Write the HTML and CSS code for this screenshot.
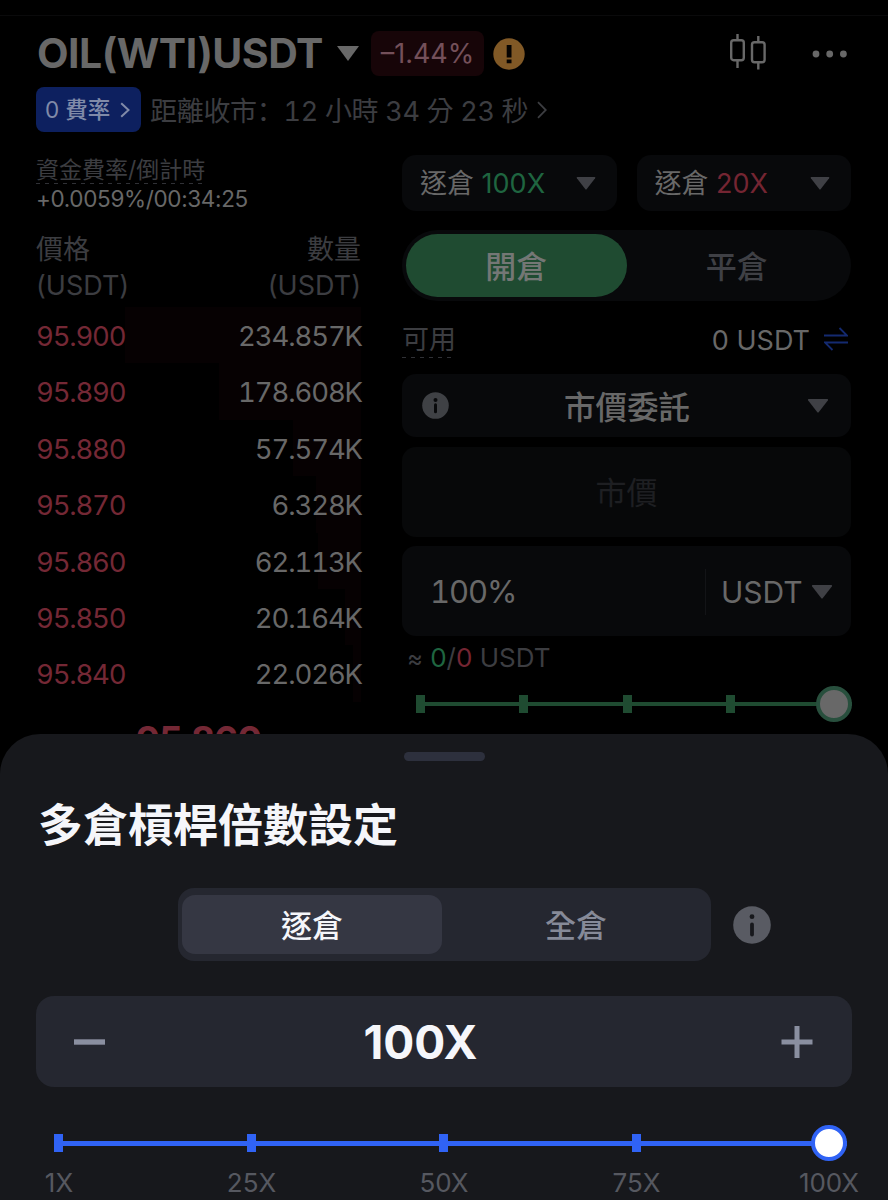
FILE: index.html
```html
<!DOCTYPE html>
<html lang="zh-Hant">
<head>
  <meta charset="UTF-8" />
  <meta name="viewport" content="width=device-width, initial-scale=1" />
  <title>OIL(WTI)USDT</title>
  <link rel="stylesheet" href="styles.css">
</head>
<body>
<div class="screen">
  <div class="status-line"></div>

  <header class="pair">
    <h1>OIL(WTI)USDT</h1>
    <svg class="pair-arrow" width="22" height="15" viewBox="0 0 22 15"><path d="M0 0h22L11 15z" fill="#686868"/></svg>
    <span class="change">–1.44%</span>
    <svg class="warn" width="32" height="32" viewBox="0 0 32 32"><circle cx="16" cy="16" r="15.7" fill="#815926"/><path d="M13.7 7h4.8v12.5h-4.8zM13.7 21.5h4.8v3.8h-4.8z" fill="#050301"/></svg>
    <svg class="candles" width="38" height="38" viewBox="0 0 38 38" fill="none" stroke="#686868" stroke-width="2.4"><rect x="2.2" y="7.2" width="12.6" height="20" rx="2.5"/><path d="M8.5 1v6M8.5 27v8M29.3 3v6M29.3 29v7.5"/><rect x="23" y="9.2" width="12.6" height="20" rx="2.5"/></svg>
    <svg class="dots" width="36" height="8" viewBox="0 0 36 8" fill="#686868"><circle cx="4" cy="4" r="3.4"/><circle cx="17.7" cy="4" r="3.4"/><circle cx="31.4" cy="4" r="3.4"/></svg>
  </header>

  <div class="notice">
    <span class="fee"><span><span class="zero">0</span> 費率</span>
      <svg width="10" height="16" viewBox="0 0 10 16" fill="none" stroke="#808aa8" stroke-width="2"><path d="M1.2 1.2L8.5 8l-7.3 6.8"/></svg>
    </span>
    <span class="closing">距離收市<span class="colon" lang="zh-Hans">：</span>12 小時 34 分 23 秒</span>
    <svg width="10" height="18" viewBox="0 0 10 18" fill="none" stroke="#3c3d41" stroke-width="1.8"><path d="M1 1.2L8.8 9 1 16.8"/></svg>
  </div>

  <main class="columns">
    <section class="book">
      <div class="funding"><span class="dashed">資金費率/倒計時</span></div>
      <div class="rate">+0.0059%/00:34:25</div>
      <div class="book-head">
        <div>價格<br>(USDT)</div>
        <div class="right">數量<br>(USDT)</div>
      </div>
      <div class="row"><i style="width:236px"></i><b>95.900</b><span>234.857K</span></div>
      <div class="row"><i style="width:142px"></i><b>95.890</b><span>178.608K</span></div>
      <div class="row"><i style="width:68px"></i><b>95.880</b><span>57.574K</span></div>
      <div class="row"><i style="width:45px"></i><b>95.870</b><span>6.328K</span></div>
      <div class="row"><i style="width:43px"></i><b>95.860</b><span>62.113K</span></div>
      <div class="row"><i style="width:16px"></i><b>95.850</b><span>20.164K</span></div>
      <div class="row"><i style="width:8px"></i><b>95.840</b><span>22.026K</span></div>
      <div class="last-price">95.860</div>
    </section>

    <section class="order">
      <div class="modes">
        <div class="mode"><span>逐倉 <em class="green">100X</em></span><svg width="20" height="13" viewBox="0 0 20 13"><path d="M1.5 0h17q1.5 0 .6 1.3L10.8 12q-.8 1-1.6 0L.9 1.3Q0 0 1.5 0z" fill="#3f4045"/></svg></div>
        <div class="mode"><span>逐倉 <em class="red">20X</em></span><svg width="20" height="13" viewBox="0 0 20 13"><path d="M1.5 0h17q1.5 0 .6 1.3L10.8 12q-.8 1-1.6 0L.9 1.3Q0 0 1.5 0z" fill="#3f4045"/></svg></div>
      </div>

      <div class="side">
        <span class="side-on">開倉</span>
        <span>平倉</span>
      </div>

      <div class="available">
        <span class="dashed">可用</span>
        <span class="balance">0 USDT</span>
        <svg width="24" height="24" viewBox="0 0 24 24" fill="none" stroke="#142a70" stroke-width="1.8"><path d="M0 8.5h23L15.5 1M24 15.5H1L8.5 23"/></svg>
      </div>

      <div class="field type">
        <svg width="27" height="27" viewBox="0 0 27 27"><circle cx="13.5" cy="13.5" r="13.3" fill="#3f4145"/><circle cx="13.5" cy="8" r="2" fill="#08090b"/><path d="M13.5 12.8v7" stroke="#08090b" stroke-width="3" stroke-linecap="round"/></svg>
        <span>市價委託</span>
        <svg width="22" height="14" viewBox="0 0 20 13"><path d="M1.5 0h17q1.5 0 .6 1.3L10.8 12q-.8 1-1.6 0L.9 1.3Q0 0 1.5 0z" fill="#3f4045"/></svg>
      </div>
      <div class="field price">市價</div>
      <div class="field amount">
        <span class="percent">100%</span>
        <span class="unit">USDT</span>
        <svg width="22" height="14" viewBox="0 0 20 13"><path d="M1.5 0h17q1.5 0 .6 1.3L10.8 12q-.8 1-1.6 0L.9 1.3Q0 0 1.5 0z" fill="#3f4045"/></svg>
      </div>
      <div class="approx"><small>≈</small> <em class="green">0</em>/<em class="red">0</em> USDT</div>
      <div class="slider slider-green"><i></i><i></i><i></i><i></i><u></u></div>
    </section>
  </main>

  <!-- leverage sheet -->
  <section class="sheet">
    <div class="handle"></div>
    <h2>多倉槓桿倍數設定</h2>
    <div class="margin-mode">
      <div class="tabs">
        <span class="tab-on">逐倉</span>
        <span>全倉</span>
      </div>
      <svg width="38" height="38" viewBox="0 0 38 38"><circle cx="19" cy="19" r="18.8" fill="#595b63"/><circle cx="19" cy="10.7" r="2.4" fill="#17181c"/><path d="M19 18.5v10" stroke="#17181c" stroke-width="3.8" stroke-linecap="round"/></svg>
    </div>
    <div class="stepper">
      <svg width="32" height="32" viewBox="0 0 32 32" stroke="#8a8fa0" stroke-width="5.4"><path d="M1 16h31"/></svg>
      <span>100X</span>
      <svg width="32" height="32" viewBox="0 0 32 32" stroke="#8a8fa0" stroke-width="5"><path d="M.5 16h31M16 0v32"/></svg>
    </div>
    <div class="slider slider-blue"><i></i><i></i><i></i><i></i><u></u></div>
    <div class="marks"><span>1X</span><span>25X</span><span>50X</span><span>75X</span><span>100X</span></div>
  </section>
</div>
</body>
</html>
```

FILE: styles.css
```css
* { margin: 0; padding: 0; box-sizing: border-box; }
html, body { height: 100%; overflow: hidden; background: #000; }
body {
  font-family: Inter, "Noto Sans CJK TC", sans-serif;
  color: #686868;
}
svg { display: block; flex-shrink: 0; }
em { font-style: normal; }

.green { color: #1f6540; }
.red { color: #742532; }

.screen {
  position: relative;
  width: 888px; height: 1200px;
  overflow: hidden;
  background: #000;
}

.status-line { height: 16px; border-bottom: 1px solid #0a0a0b; }

/* header */
.pair {
  display: flex;
  align-items: center;
  height: 75px;
  padding: 0 40px 0 37px;
}
.pair h1 {
  width: 300px;
  margin-top: -2px;
  font-size: 41px;
  line-height: 50px;
  font-weight: 700;
  letter-spacing: -0.5px;
  white-space: nowrap;
}
.change {
  width: 113px; height: 45px;
  margin-left: 12px;
  border-radius: 8px;
  background: #170508;
  color: #74505a;
  font-size: 27px;
  line-height: 46px;
  text-align: center;
}
.warn { margin-left: 9px; }
.candles { margin: -3px 0 0 auto; }
.dots { margin-left: 45px; }

.notice {
  display: flex;
  align-items: center;
  height: 45px;
  margin-top: -4px;
  padding-left: 36px;
  color: #3c3d41;
}
.fee {
  display: flex;
  align-items: center;
  justify-content: space-between;
  width: 105px; height: 45px;
  padding: 0 11px 0 9px;
  border-radius: 8px;
  background: #0d205f;
  color: #808aa8;
  font-size: 22.5px;
  line-height: 40px;
  font-weight: 500;
  white-space: nowrap;
}
.zero { font-weight: 400; }
.closing {
  width: 379px;
  margin: -1px 8px 0 9px;
  font-size: 27px;
  font-variant-numeric: tabular-nums;
  letter-spacing: -.3px;
  white-space: nowrap;
}
.colon { font-family: "Noto Sans CJK SC", sans-serif; }

.columns {
  display: flex;
  justify-content: space-between;
  padding: 23px 37px 0 36px;
}

/* order book */
.book { width: 325px; }
.dashed {
  background: repeating-linear-gradient(90deg, #303136 0 4px, transparent 4px 9px) left bottom / 100% 1px no-repeat;
}
.funding {
  height: 29px;
  font-size: 23px;
  line-height: 31px;
  color: #3c3d41;
}
.funding .dashed { display: inline-block; height: 29px; }
.rate {
  height: 30px;
  font-size: 22.5px;
  line-height: 30px;
  letter-spacing: -.35px;
}
.book-head {
  display: flex;
  justify-content: space-between;
  height: 93px;
  padding-top: 18px;
  font-size: 27px;
  line-height: 36px;
  color: #3c3d41;
}
.right { text-align: right; }
.row {
  position: relative;
  display: flex;
  justify-content: space-between;
  height: 56.4px;
  font-size: 27.5px;
  line-height: 58px;
  font-variant-numeric: tabular-nums;
}
.row i {
  position: absolute;
  top: 0; right: 0; bottom: 0;
  background: #060102;
}
.row b, .row span { position: relative; letter-spacing: -1.1px; }
.row b { font-weight: 400; color: #742835; }
.row b { letter-spacing: -1.2px; }
.row span { margin-right: -1px; }
.last-price {
  margin-top: 15px;
  font-size: 37px;
  line-height: 46px;
  font-weight: 700;
  letter-spacing: -1px;
  color: #742835;
  text-align: center;
}

/* order form */
.order { width: 449px; }
.modes { display: flex; gap: 20px; }
.mode {
  display: flex;
  align-items: center;
  justify-content: space-between;
  flex: 1;
  height: 56px;
  padding: 0 21px 0 18px;
  border-radius: 14px;
  background: #08090b;
  font-size: 27px;
  line-height: 40px;
  white-space: nowrap;
}
.mode span { margin-top: 1px; }
.side {
  display: flex;
  height: 71px;
  margin-top: 19px;
  padding: 4px;
  border-radius: 36px;
  background: #08090b;
  color: #3f4045;
  font-size: 31px;
  font-weight: 500;
  line-height: 66px;
  text-align: center;
}
.side span { flex: 1; }
.side .side-on {
  border-radius: 32px;
  background: #1f4b31;
  color: #747775;
}
.available {
  display: flex;
  align-items: center;
  height: 73px;
  padding: 2px 3px 0 0;
  font-size: 27px;
}
.available .dashed {
  height: 38px;
  line-height: 40px;
  color: #3c3d41;
}
.balance { margin: 3px 14px 0 auto; font-size: 27px; }

.field {
  display: flex;
  align-items: center;
  border-radius: 14px;
  background: #08090b;
}
.type {
  justify-content: space-between;
  height: 63px;
  padding: 0 22px 0 20px;
  font-size: 31.5px;
  font-weight: 500;
}
.type span { margin: -1px 0 0 -2px; }
.price {
  justify-content: center;
  height: 90px;
  margin-top: 10px;
  padding-bottom: 3px;
  background: #070809;
  color: #1e1f22;
  font-size: 31px;
}
.amount {
  height: 90px;
  margin-top: 9px;
  padding: 1px 18px 0 28px;
  font-size: 31px;
  font-variant-numeric: tabular-nums;
}
.percent { flex: 1; letter-spacing: -1.1px; }
.unit {
  width: 106px;
  padding-left: 15px;
  border-left: 1px solid #131417;
  line-height: 46px;
  font-size: 30px;
}
.approx {
  height: 45px;
  padding-left: 5px;
  font-size: 26px;
  line-height: 44px;
  color: #3c3d41;
  white-space: nowrap;
}
.approx small { font-size: 24px; }

/* ticked sliders */
.slider {
  display: flex;
  align-items: center;
  justify-content: space-between;
  height: 36px;
}
.slider i { width: 9px; height: 18px; background: currentColor; }
.slider u {
  width: 36px; height: 36px;
  margin-left: -13.5px;
  border: 4px solid currentColor;
  border-radius: 50%;
}
.slider-green {
  margin: 5px -1px 0 14px;
  color: #1f4b31;
  background: linear-gradient(currentColor, currentColor) center / 100% 4px no-repeat;
}
.slider-green u { background: #686868; border-color: #284f3d; }

/* leverage sheet */
.sheet {
  position: absolute;
  left: 0; right: 0; top: 734px; bottom: 0;
  padding: 18px 36px 0;
  border-radius: 40px 40px 0 0;
  background: #17181c;
}
.handle {
  width: 81px; height: 9px;
  margin: 0 auto;
  border-radius: 5px;
  background: #2d303d;
}
.sheet h2 {
  margin-top: 32px;
  padding-left: 2px;
  font-size: 45px;
  line-height: 66px;
  font-weight: 700;
  color: #f5f6fa;
}
.margin-mode {
  display: flex;
  align-items: center;
  gap: 22px;
  margin: 29px 0 0 142px;
}
.tabs {
  display: flex;
  width: 533px; height: 73px;
  padding: 7px 4px;
  border-radius: 16px;
  background: #252730;
  color: #868a98;
  font-size: 31px;
  font-weight: 500;
  line-height: 61px;
  text-align: center;
}
.tabs span { width: 260px; height: 59px; }
.tabs span + span { margin-left: 4px; }
.tabs .tab-on { border-radius: 13px; background: #353743; color: #f5f6fa; }
.stepper {
  display: flex;
  align-items: center;
  justify-content: space-between;
  height: 91px;
  margin-top: 35px;
  padding: 0 39px 0 37px;
  border-radius: 18px;
  background: #252730;
  color: #f5f6fa;
  font-size: 46px;
  font-weight: 700;
}
.stepper span { margin-left: -45px; }
.slider-blue {
  margin: 38px 5px 0 18px;
  color: #3063f5;
  background: linear-gradient(currentColor, currentColor) center / 100% 5px no-repeat;
}
.slider-blue u { background: #fff; }
.marks {
  display: flex;
  justify-content: space-between;
  margin: 5px -27px 0 -27px;
  font-size: 26px;
  line-height: 34px;
  color: #565860;
}
.marks span { width: 100px; text-align: center; }
```
